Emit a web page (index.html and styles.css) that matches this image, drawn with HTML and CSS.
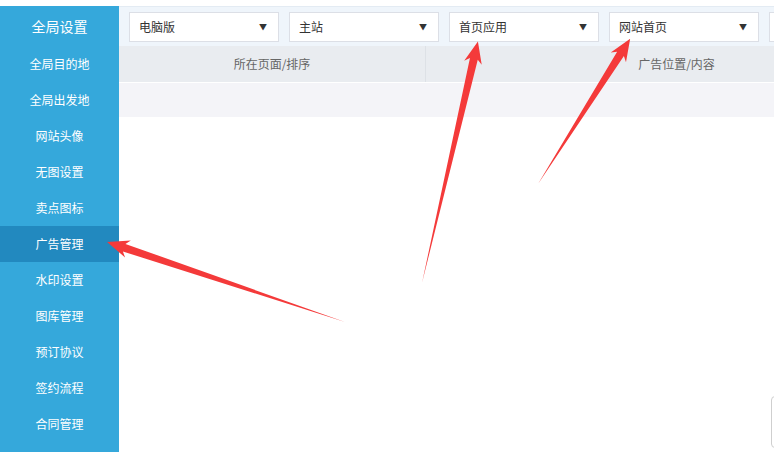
FILE: index.html
```html
<!DOCTYPE html>
<html lang="zh-CN">
<head>
  <meta charset="UTF-8" />
  <title>全局设置 – 广告管理</title>
  <link rel="stylesheet" href="styles.css">
</head>
<body>
  <div class="page">
    <aside class="sidebar">
      <div class="side-title">全局设置</div>
      <a class="side-item">全局目的地</a>
      <a class="side-item">全局出发地</a>
      <a class="side-item">网站头像</a>
      <a class="side-item">无图设置</a>
      <a class="side-item">卖点图标</a>
      <a class="side-item active">广告管理</a>
      <a class="side-item">水印设置</a>
      <a class="side-item">图库管理</a>
      <a class="side-item">预订协议</a>
      <a class="side-item">签约流程</a>
      <a class="side-item">合同管理</a>
    </aside>

    <main class="main">
      <div class="toolbar">
        <div class="select"><span>电脑版</span><i class="caret">&#9660;</i></div>
        <div class="select"><span>主站</span><i class="caret">&#9660;</i></div>
        <div class="select"><span>首页应用</span><i class="caret">&#9660;</i></div>
        <div class="select"><span>网站首页</span><i class="caret">&#9660;</i></div>
        <div class="select"></div>
      </div>
      <div class="table">
        <div class="thead">
          <div class="th">所在页面/排序</div>
          <div class="th">广告位置/内容</div>
        </div>
        <div class="tr">
          <div class="td"></div>
          <div class="td"></div>
        </div>
      </div>
    </main>
  </div>

  <div class="float-box"></div>

  <!-- annotation arrows -->
  <svg class="marks" width="774" height="452" viewBox="0 0 774 452">
    <g fill="#f43a3a">
      <polygon transform="translate(345 322) rotate(198.6)" points="0,0 233,-4 229,-9 251,0 229,9 233,4" />
      <polygon transform="translate(422 283) rotate(-76.97)" points="0,0 230,-4 226,-9 248,0 226,9 230,4" />
      <polygon transform="translate(538 184) rotate(-57.6)" points="0,0 154,-4 150,-9 172,0 150,9 154,4" />
    </g>
  </svg>
</body>
</html>
```

FILE: styles.css
```css
/* ——— admin settings page ——— */
body { margin: 0; background: #fff; font-family: "Noto Sans CJK SC", "Noto Sans", sans-serif; font-size: 12px; color: #333; overflow: hidden; }
.page { display: flex; padding-top: 6px; min-height: 446px; }

.sidebar { width: 119px; flex: none; background: #35a8db; display: flex; flex-direction: column; }
.side-title { height: 40px; line-height: 40px; text-align: center; color: #fff; font-size: 14px; }
.side-item { display: block; height: 36px; line-height: 36px; text-align: center; color: #fff; font-size: 12px; cursor: pointer; }
.side-item.active { background: #2289bf; }

.main { flex: 1; min-width: 0; overflow: hidden; }
.toolbar { height: 40px; background: #eff5fb; border-top: 1px solid #e3ebf3; box-sizing: border-box; display: flex; align-items: center; gap: 10px; padding: 0 10px; }
.select {
  flex: none; width: 150px; height: 30px; box-sizing: border-box;
  border: 1px solid #dcdfe6; background: #fff;
  display: flex; align-items: center; justify-content: space-between; padding: 0 11px 0 9px;
}
.caret { font-style: normal; font-size: 8px; color: #333; }

.table { width: 808px; }
.thead, .tr { display: grid; grid-template-columns: 306px 502px; }
.thead { height: 36px; background: #e9ecf0; border-bottom: 1px solid #fff; }
.th { line-height: 36px; text-align: center; color: #666; font-size: 12px; }
.th + .th { border-left: 1px solid #dde1e6; }
.tr { height: 34px; background: #f4f4f8; }

.float-box { position: absolute; left: 771px; top: 396px; width: 40px; height: 50px; border: 1px solid #cfcfcf; border-radius: 4px; background: #fff; }
.marks { position: absolute; left: 0; top: 0; pointer-events: none; }
```
